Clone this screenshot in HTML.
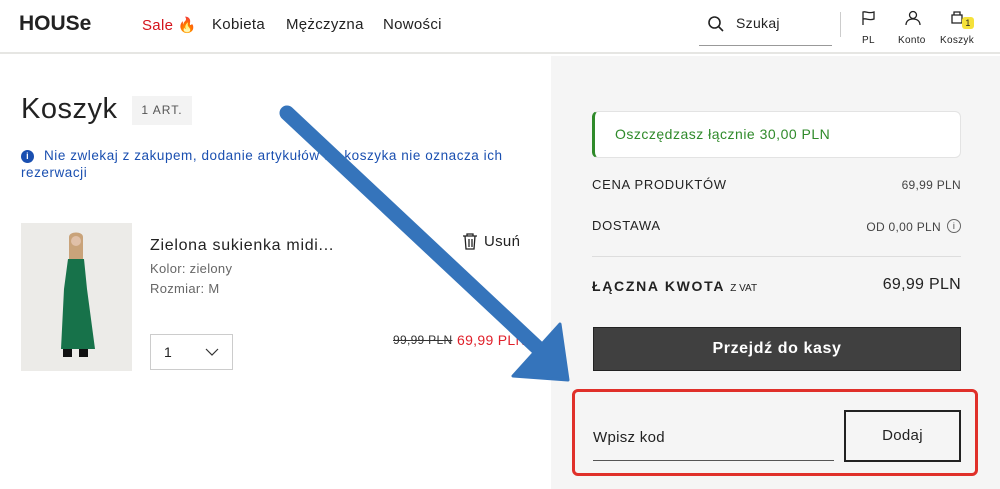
<!DOCTYPE html><html><head><meta charset="utf-8"><style>
*{margin:0;padding:0;box-sizing:border-box}
body{width:1000px;height:489px;overflow:hidden;background:#fff;font-family:"Liberation Sans",sans-serif;color:#222;position:relative;letter-spacing:0.3px}
.a{position:absolute;white-space:nowrap}
.r{text-align:right}
</style></head><body>
<div class="a" style="left:0;top:0;width:1000px;height:54px;border-bottom:2px solid #e6e6e3;background:#fff"></div>
<div class="a" style="left:19px;top:12px;font-size:21px;font-weight:bold;letter-spacing:0px">HOUSe</div>
<div class="a" style="left:142px;top:16px;font-size:15px;color:#d4141c">Sale 🔥</div>
<div class="a" style="left:212px;top:16px;font-size:15px">Kobieta</div>
<div class="a" style="left:286px;top:16px;font-size:15px">Mężczyzna</div>
<div class="a" style="left:383px;top:16px;font-size:15px">Nowości</div>
<svg class="a" style="left:707px;top:15px" width="18" height="18" viewBox="0 0 18 18"><circle cx="7.5" cy="7.5" r="5.5" fill="none" stroke="#222" stroke-width="1.6"/><path d="M11.5 11.5L16 16" stroke="#222" stroke-width="1.6"/></svg>
<div class="a" style="left:736px;top:15px;font-size:14px">Szukaj</div>
<div class="a" style="left:699px;top:45px;width:133px;height:1px;background:#999"></div>
<div class="a" style="left:840px;top:12px;width:1px;height:25px;background:#ccc"></div>
<svg class="a" style="left:861px;top:10px" width="16" height="16" viewBox="0 0 16 16"><path d="M2 15V2c3-1 5 2 11 0v7c-5 2-7-1-11 0" fill="none" stroke="#222" stroke-width="1.3"/></svg>
<div class="a" style="left:862px;top:35px;font-size:10px">PL</div>
<svg class="a" style="left:904px;top:10px" width="18" height="16" viewBox="0 0 18 16"><circle cx="9" cy="5" r="3.5" fill="none" stroke="#222" stroke-width="1.3"/><path d="M2 15c0-4 3-6 7-6s7 2 7 6" fill="none" stroke="#222" stroke-width="1.3"/></svg>
<div class="a" style="left:898px;top:35px;font-size:10px">Konto</div>
<svg class="a" style="left:950px;top:9px" width="14" height="16" viewBox="0 0 14 16"><path d="M2 6h10v8H2zM4 6V3h6v3" fill="none" stroke="#222" stroke-width="1.3"/></svg>
<div class="a" style="left:962px;top:17px;width:12px;height:12px;border-radius:3px;background:#f5e13a;font-size:9px;text-align:center;line-height:12px">1</div>
<div class="a" style="left:940px;top:35px;font-size:10px">Koszyk</div>

<div class="a" style="left:551px;top:56px;width:449px;height:433px;background:#f5f5f5"></div>

<div class="a" style="left:21px;top:93px;font-size:29px;font-weight:300;letter-spacing:0.5px">Koszyk</div>
<div class="a" style="left:132px;top:96px;width:60px;height:29px;background:#f3f3f3;font-size:12px;color:#555;letter-spacing:1px;text-align:center;line-height:29px">1 ART.</div>
<div class="a" style="left:21px;top:150px;width:13px;height:13px;border-radius:50%;background:#1a4fb0;color:#fff;font-size:9px;font-weight:bold;text-align:center;line-height:13px">i</div>
<div class="a" style="left:44px;top:148px;font-size:13.5px;color:#1a4fb0;letter-spacing:0.55px">Nie zwlekaj z zakupem, dodanie artykułów do koszyka nie oznacza ich</div>
<div class="a" style="left:21px;top:165px;font-size:13.5px;color:#1a4fb0;letter-spacing:0.55px">rezerwacji</div>

<div class="a" style="left:21px;top:223px;width:111px;height:148px;background:#ecebe8"></div>
<svg class="a" style="left:21px;top:223px" width="111" height="148" viewBox="0 0 111 148"><path d="M48 14c0-6 14-6 14 0v22H48z" fill="#c9a37a"/><circle cx="55" cy="18" r="5" fill="#e0c0a8"/><path d="M47 36h16l3 30 8 60H40l3-60z" fill="#17724a"/><rect x="42" y="126" width="9" height="8" fill="#111"/><rect x="58" y="126" width="9" height="8" fill="#111"/></svg>
<div class="a" style="left:150px;top:237px;font-size:16px;letter-spacing:0.7px">Zielona sukienka midi...</div>
<div class="a" style="left:150px;top:261px;font-size:13px;color:#666">Kolor: zielony</div>
<div class="a" style="left:150px;top:281px;font-size:13px;color:#666">Rozmiar: M</div>
<div class="a" style="left:150px;top:334px;width:83px;height:36px;border:1px solid #ccc;background:#fff"></div>
<div class="a" style="left:164px;top:344px;font-size:14px">1</div>
<svg class="a" style="left:205px;top:348px" width="14" height="8"><path d="M1 1l6 6 6-6" fill="none" stroke="#333" stroke-width="1.2"/></svg>
<svg class="a" style="left:462px;top:233px" width="16" height="17" viewBox="0 0 16 17"><path d="M1 3h14M5 3V1h6v2M3 3l1 13h8l1-13M7 6v8M10 6v8" fill="none" stroke="#222" stroke-width="1.3"/></svg>
<div class="a" style="left:484px;top:233px;font-size:15px">Usuń</div>
<div class="a" style="left:393px;top:333px;font-size:12px;color:#333;text-decoration:line-through">99,99 PLN</div>
<div class="a" style="left:457px;top:332px;font-size:14px;color:#e0202a">69,99 PLN</div>

<div class="a" style="left:592px;top:111px;width:369px;height:47px;background:#fff;border:1px solid #e3e3e3;border-left:3px solid #2f8a2a;border-radius:6px"></div>
<div class="a" style="left:615px;top:126px;font-size:14px;color:#2f8a2a;letter-spacing:0.5px">Oszczędzasz łącznie 30,00 PLN</div>
<div class="a" style="left:592px;top:177px;font-size:13px;letter-spacing:0.7px">CENA PRODUKTÓW</div>
<div class="a r" style="left:800px;width:161px;top:178px;font-size:12px;color:#444">69,99 PLN</div>
<div class="a" style="left:592px;top:218px;font-size:13px;letter-spacing:0.7px">DOSTAWA</div>
<div class="a r" style="left:800px;width:141px;top:220px;font-size:12px;color:#444">OD 0,00 PLN</div>
<div class="a" style="left:947px;top:219px;width:14px;height:14px;border:1px solid #666;border-radius:50%;font-size:9px;text-align:center;line-height:12px;color:#444">i</div>
<div class="a" style="left:592px;top:256px;width:369px;height:1px;background:#ddd"></div>
<div class="a" style="left:592px;top:278px;font-size:14px;font-weight:bold;letter-spacing:1.7px">ŁĄCZNA KWOTA <span style="font-size:10px;font-weight:normal;letter-spacing:0">Z VAT</span></div>
<div class="a r" style="left:800px;width:161px;top:276px;font-size:16px">69,99 PLN</div>
<div class="a" style="left:593px;top:327px;width:368px;height:44px;background:#404040;border:1px solid #222;color:#fff;font-size:16px;font-weight:bold;text-align:center;line-height:42px;letter-spacing:0.6px">Przejdź do kasy</div>
<div class="a" style="left:572px;top:389px;width:406px;height:87px;border:3px solid #e0302a;border-radius:6px"></div>
<div class="a" style="left:593px;top:429px;font-size:15px">Wpisz kod</div>
<div class="a" style="left:593px;top:460px;width:241px;height:1px;background:#555"></div>
<div class="a" style="left:844px;top:410px;width:117px;height:52px;border:2px solid #222;font-size:15px;text-align:center;line-height:48px">Dodaj</div>

<svg class="a" style="left:0;top:0" width="1000" height="489"><path d="M287 113L541 351" stroke="#3574bb" stroke-width="15" stroke-linecap="round"/><path d="M513 376L568 380L560 324Z" fill="#3574bb" stroke="#3574bb" stroke-width="3" stroke-linejoin="round"/></svg>
</body></html>
